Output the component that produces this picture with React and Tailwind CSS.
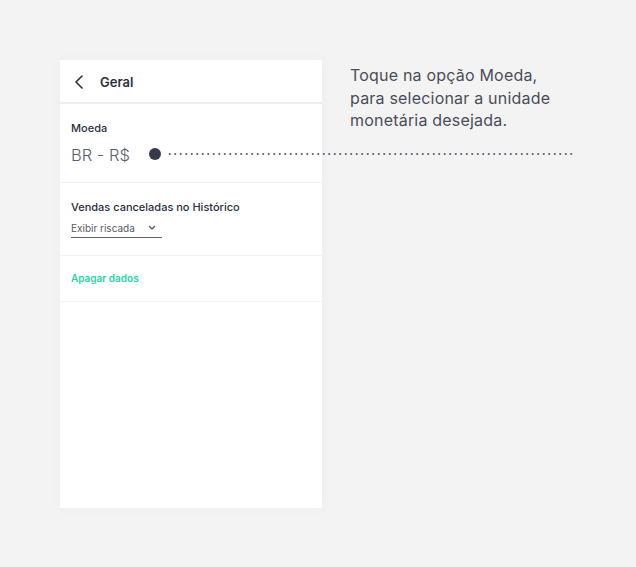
import React from 'react';

const Chevron = () => (
  <svg width="10" height="16" viewBox="0 0 10 16" fill="none" stroke="#2b2f3d" strokeWidth="1.6" strokeLinecap="round" strokeLinejoin="round">
    <path d="M8 2 L2 8 L8 14" />
  </svg>
);

const Caret = () => (
  <svg width="8" height="6" viewBox="0 0 8 6" fill="none" stroke="#555a66" strokeWidth="1.3" strokeLinecap="round" strokeLinejoin="round">
    <path d="M1.5 1.5 L4 4 L6.5 1.5" />
  </svg>
);

export default function App() {
  return (
    <div className="relative w-[636px] h-[567px] bg-[#f3f3f3] flex pt-[60px] pl-[60px]" style={{ fontFamily: 'Inter, "Noto Sans", sans-serif' }}>
      <div className="w-[262px] h-[448px] bg-white shadow-[0_0_12px_rgba(0,0,0,0.03)] flex flex-col">
        <div className="h-[44px] flex items-center pl-[40px] pt-[3px] relative border-b-2 border-[#eceef1]">
          <span className="absolute left-[14px] top-[14px]"><Chevron /></span>
          <span className="text-[13px] font-semibold text-[#2b2f3d]">Geral</span>
        </div>
        <div className="h-[79px] border-b border-[#f1f2f4] px-[11px] pt-[17px]">
          <div className="text-[11px] font-medium text-[#2b2f3d] leading-[14px]">Moeda</div>
          <div className="text-[16.5px] font-light text-[#5b5f6b] leading-[22px] mt-[9px]">BR - R$</div>
        </div>
        <div className="h-[73px] border-b border-[#f1f2f4] px-[11px] pt-[17px]">
          <div className="text-[11px] font-medium text-[#2b2f3d] leading-[15px]">Vendas canceladas no Histórico</div>
          <div className="mt-[6px] w-[91px] border-b border-[#5f6470] flex items-center justify-between pr-[6px] pb-[2px]">
            <span className="text-[10px] text-[#555a66] leading-[14px]">Exibir riscada</span>
            <Caret />
          </div>
        </div>
        <div className="h-[46px] border-b border-[#f3f4f6] px-[11px] flex items-center">
          <span className="text-[10px] font-semibold text-[#1fd6a8]">Apagar dados</span>
        </div>
      </div>
      <div className="ml-[28px] mt-[4px] text-[16px] leading-[22.5px] text-[#4a4d59] tracking-[0.2px]">
        Toque na opção Moeda,<br />para selecionar a unidade<br />monetária desejada.
      </div>
      <div className="absolute left-[149px] top-[148px] w-[12px] h-[12px] rounded-full bg-[#363a4b]" />
      <div className="absolute left-[167px] top-[153px] w-[406px] h-[2px]" style={{ backgroundImage: 'radial-gradient(circle, #6a6e79 0.8px, transparent 1px)', backgroundSize: '5.5px 2px' }} />
    </div>
  );
}
